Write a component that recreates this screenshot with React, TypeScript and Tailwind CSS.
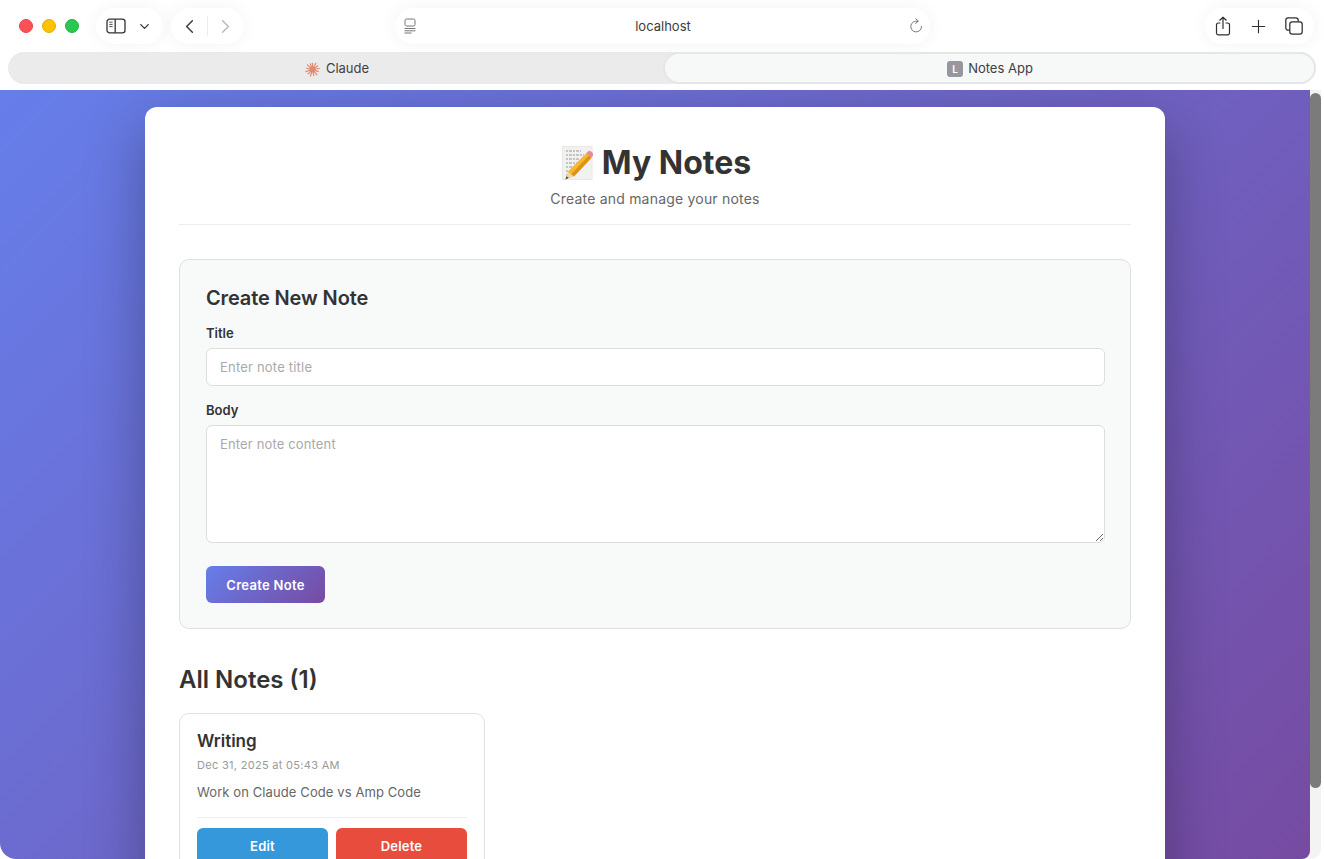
import { ChevronDown, ChevronLeft, ChevronRight, Plus } from "lucide-react";

function SidebarIcon() {
  return (
    <svg width="20" height="16" viewBox="0 0 20 16" fill="none" stroke="#333" strokeWidth="1.3">
      <rect x="1" y="1.2" width="18" height="13.6" rx="2.6" />
      <path d="M9.2 1.2v13.6" />
      <path d="M3.2 4.2h3.4M3.2 6.4h3.4M3.2 8.6h3.4" stroke="#555" strokeWidth="1" />
    </svg>
  );
}

function PageMenuIcon() {
  return (
    <svg width="14" height="16" viewBox="0 0 14 16" fill="none" stroke="#777" strokeWidth="1">
      <rect x="2" y="1" width="10" height="7" rx="1.6" />
      <path d="M1.5 10.5h11M1.5 12.8h11M1.5 15h7" />
    </svg>
  );
}

function ReloadIcon() {
  return (
    <svg width="14" height="16" viewBox="0 0 14 16" fill="none" stroke="#777" strokeWidth="1" strokeLinecap="round">
      <path d="M8.6 3.3A5.4 5.4 0 1 0 12.6 8.6" />
      <path d="M6.8 0.8l2.6 2.4-2.8 2.2" />
    </svg>
  );
}

function ShareIcon() {
  return (
    <svg width="16" height="20" viewBox="0 0 16 20" fill="none" stroke="#2f2f2f" strokeWidth="1.2" strokeLinecap="round" strokeLinejoin="round">
      <path d="M8 12.5V1.2M4.8 4.2L8 1.2l3.2 3" />
      <path d="M5 7H3a1.8 1.8 0 0 0-1.5 1.8v8.2A1.8 1.8 0 0 0 3.3 18.8h9.4a1.8 1.8 0 0 0 1.8-1.8V8.8A1.8 1.8 0 0 0 12.7 7H11" />
    </svg>
  );
}

function TabsIcon() {
  return (
    <svg width="18" height="18" viewBox="0 0 18 18" fill="none" stroke="#2f2f2f" strokeWidth="1.25">
      <rect x="4.8" y="4.8" width="12.4" height="12.4" rx="2.4" />
      <path d="M4.8 13.2H3.2A2.4 2.4 0 0 1 .8 10.8V3.2A2.4 2.4 0 0 1 3.2.8h7.6a2.4 2.4 0 0 1 2.4 2.4v1.6" />
    </svg>
  );
}

function ClaudeIcon() {
  const rays = [0, 28, 55, 82, 110, 140, 168, 197, 225, 252, 282, 312, 338];
  return (
    <svg width="15" height="15" viewBox="0 0 16 16" stroke="#e08a6e" strokeWidth="1.25" strokeLinecap="round">
      {rays.map((r, i) => (
        <line key={r} x1="8" y1="8" x2="8" y2={i % 2 ? 0.6 : 1.4} transform={`rotate(${r} 8 8)`} />
      ))}
      <circle cx="8" cy="8" r="3.2" fill="#e08a6e" stroke="none" />
    </svg>
  );
}

function MemoEmoji() {
  return (
    <svg width="31" height="34" viewBox="0 0 31 34" className="shrink-0">
      <rect x="0" y="0" width="30.5" height="34" fill="#e6e6e4" />
      <rect x="0.8" y="0.8" width="29" height="32.4" fill="#f1f1ef" />
      <g stroke="#77776f" strokeWidth="0.7" strokeDasharray="2 1 3 1" fill="none">
        <path d="M4 5h15M4 9h18M4 13h14M4 17h11M4 21h6M4 25h7M4 29h6" />
      </g>
      <path d="M24 7.5l5.5 4.2L12 30.5l-6.5-4.5z" fill="#f6b92c" />
      <path d="M26.7 9.6l2.8 2.1L12 30.5l-3-2z" fill="#de9218" />
      <path d="M24 7.5l2-2.1c1-.9 2-.9 3 0l2 1.8c.6.8.6 1.6 0 2.4l-1.6 2.1z" fill="#e88b8c" />
      <path d="M5.5 26l6.5 4.5-8.5 3z" fill="#f0d6a8" />
      <path d="M4.4 30.2l2.4 1.6-3.3 1.7z" fill="#45413c" />
    </svg>
  );
}

function Toolbar() {
  return (
    <div className="flex h-[52px] items-center pl-[19px] pr-[10px]">
      <div className="flex gap-[9px]">
        <span className="size-[14px] rounded-full border border-[#e9414a] bg-[#ff5058]" />
        <span className="size-[14px] rounded-full border border-[#e5ac06] bg-[#ffc104]" />
        <span className="size-[14px] rounded-full border border-[#25b04a] bg-[#2ac84f]" />
      </div>
      <div className="ml-[17px] flex h-9 w-[67px] items-center justify-between rounded-full bg-white pl-[10px] pr-[11px] shadow-[0_0_18px_rgba(0,0,0,0.05)]">
        <SidebarIcon />
        <ChevronDown size={15} strokeWidth={2} color="#2f2f2f" />
      </div>
      <div className="ml-2 flex h-9 w-[73px] items-center rounded-full bg-white shadow-[0_0_18px_rgba(0,0,0,0.05)]">
        <div className="flex w-9 justify-center">
          <ChevronLeft size={23} strokeWidth={1.5} color="#3a3a3a" />
        </div>
        <div className="h-5 w-px bg-[#ececec]" />
        <div className="flex flex-1 justify-center pr-[2px]">
          <ChevronRight size={23} strokeWidth={1.5} color="#b9b9b9" />
        </div>
      </div>
      <div className="ml-[151px] flex h-9 w-[535px] items-center justify-between rounded-full bg-white pl-[8px] pr-[7px] shadow-[0_0_18px_rgba(0,0,0,0.05)]">
        <PageMenuIcon />
        <span className="pt-[2px] text-[13px] text-[#3c3c3c]">localhost</span>
        <ReloadIcon />
      </div>
      <div className="ml-auto flex h-9 w-[109px] items-center justify-between rounded-full bg-white pl-[10px] pr-[11px] shadow-[0_0_18px_rgba(0,0,0,0.05)]">
        <ShareIcon />
        <Plus size={21} strokeWidth={1.3} color="#2f2f2f" />
        <TabsIcon />
      </div>
    </div>
  );
}

function TabBar() {
  return (
    <div className="mx-2 flex h-8 rounded-[16px] bg-[#ebebeb] text-[13px] text-[#3f3f3f]">
      <div className="flex w-[655px] items-center justify-center gap-[6px] pl-[3px] pt-[2px]">
        <ClaudeIcon />
        <span>Claude</span>
      </div>
      <div className="flex flex-1 items-center justify-center gap-[5px] rounded-[16px] border-2 border-[#e6e6e6] bg-[#f7f8f8] pl-[1px] pt-[2px]">
        <span className="flex size-4 items-center justify-center rounded-[3px] bg-[#97979f] text-[10px] font-semibold text-white">
          L
        </span>
        <span>Notes App</span>
      </div>
    </div>
  );
}

function NoteCard() {
  return (
    <div className="w-[306px] rounded-[10px] border border-[#e0e0e0] bg-white px-[17px] pb-4 pt-4">
      <h3 className="text-[17px] font-semibold leading-[22px] text-[#333]">Writing</h3>
      <p className="mt-[6px] text-[11px] leading-[14px] tracking-[0.3px] text-[#999]">Dec 31, 2025 at 05:43 AM</p>
      <p className="mt-[10px] text-[13px] leading-[20px] tracking-[0.1px] text-[#666]">Work on Claude Code vs Amp Code</p>
      <div className="mt-[15px] flex gap-2 border-t border-[#eeeeee] pt-[10px]">
        <button className="h-9 flex-1 rounded-md bg-[#3498db] pt-[1px] text-[13px] font-semibold tracking-[0.2px] text-white">Edit</button>
        <button className="h-9 flex-1 rounded-md bg-[#e74c3c] pt-[1px] text-[13px] font-semibold tracking-[0.2px] text-white">Delete</button>
      </div>
    </div>
  );
}

function CreateForm() {
  return (
    <section className="mt-[34px] rounded-[10px] border border-[#e0e0e0] bg-[#f8f9f9] pb-[25px] pl-[26px] pr-[25px] pt-[26px]">
      <h2 className="text-[20px] font-semibold leading-6 tracking-[-0.13px] text-[#333]">Create New Note</h2>
      <label className="mt-[15px] block text-[13px] font-semibold leading-4 text-[#333]">Title</label>
      <input
        className="mt-[7px] block h-[38px] w-full rounded-md border border-[#ddd] bg-white px-[13px] text-[13px] tracking-[0.2px] outline-none placeholder:text-[#a9a9a9]"
        placeholder="Enter note title"
      />
      <label className="mt-[16px] block text-[13px] font-semibold leading-4 text-[#333]">Body</label>
      <textarea
        className="mt-[7px] block h-[118px] w-full rounded-md border border-[#ddd] bg-white px-[13px] py-[9px] text-[13px] tracking-[0.15px] outline-none placeholder:text-[#a9a9a9]"
        placeholder="Enter note content"
      />
      <button className="mt-[23px] block h-[37px] w-[119px] rounded-md bg-[linear-gradient(135deg,#667eea,#764ba2)] pt-[3px] text-[13px] font-semibold tracking-[0.3px] text-white">
        Create Note
      </button>
    </section>
  );
}

export default function App() {
  return (
    <div className="h-[859px] w-[1324px] overflow-hidden bg-white font-['Inter',sans-serif]">
      <Toolbar />
      <TabBar />
      <div className="mt-[6px] flex h-[769px]">
        <main className="h-full w-[1310px] overflow-hidden rounded-bl-[16px] rounded-br-[8px] bg-[linear-gradient(135deg,#667eea,#764ba2)] px-[145px] pt-[17px]">
          <div className="h-[900px] rounded-xl bg-white px-[34px] pt-[35px] shadow-[0_20px_60px_rgba(0,0,0,0.3)]">
            <header className="border-b border-[#eeeeee] pb-[15px] text-center">
              <h1 className="flex items-center justify-center gap-[9px] pl-[3px] text-[32px] font-bold leading-[42px] text-[#333]">
                <MemoEmoji />
                <span>My Notes</span>
              </h1>
              <p className="mt-[5px] text-[14px] leading-[20px] tracking-[0.2px] text-[#666]">Create and manage your notes</p>
            </header>
            <CreateForm />
            <h2 className="mb-[17px] mt-[35px] text-[24px] font-semibold leading-8 text-[#333]">All Notes (1)</h2>
            <NoteCard />
          </div>
        </main>
        <div className="h-full w-[11px] rounded-br-[16px] bg-[#f3f3f3] pt-[3px]">
          <div className="h-[695px] rounded-full bg-[#7b7b7b]" />
        </div>
      </div>
    </div>
  );
}
